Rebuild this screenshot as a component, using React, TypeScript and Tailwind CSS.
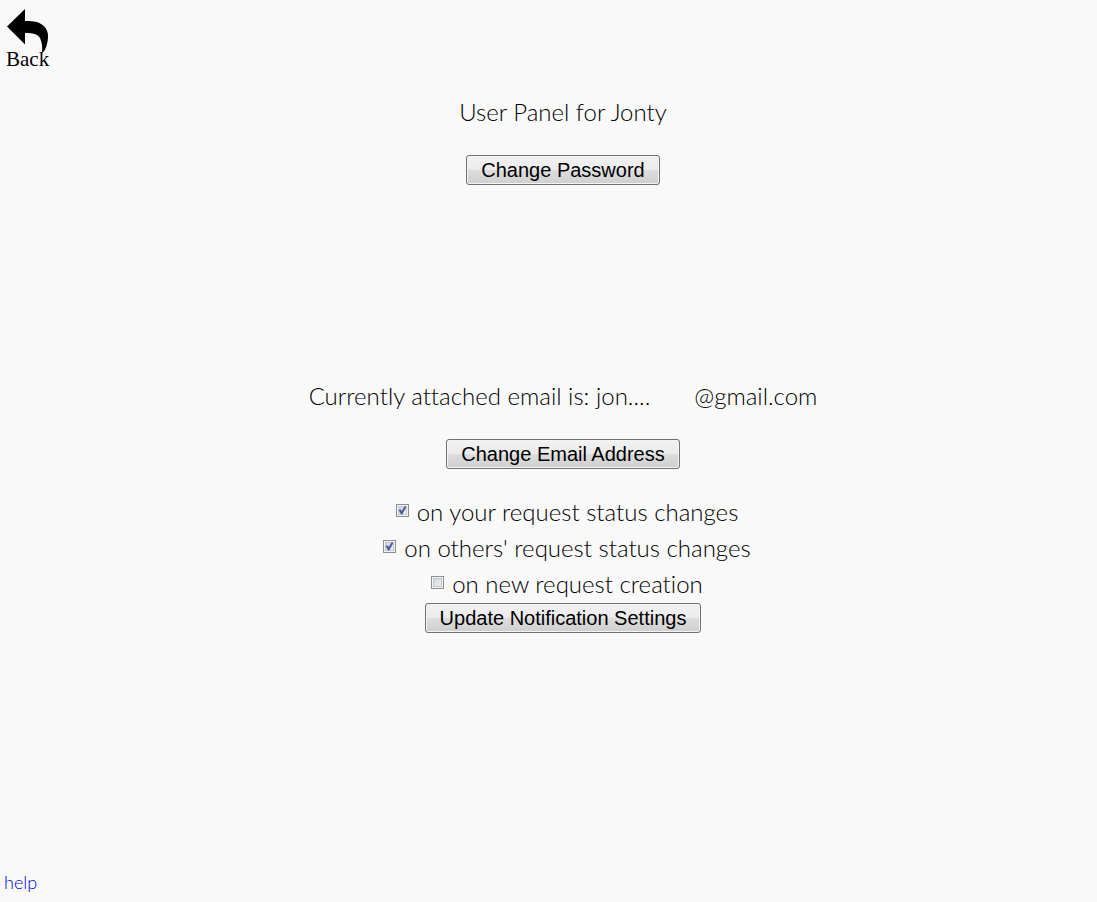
import { useState } from "react";
import type { ReactNode } from "react";

function PanelButton({ children }: { children: ReactNode }) {
  return (
    <button
      type="button"
      className="h-[30px] rounded-[3px] border border-[#707070] bg-[linear-gradient(to_bottom,#f2f2f2_0%,#ebebeb_50%,#dddddd_50%,#cfcfcf_100%)] px-3.5 font-['Liberation_Sans',Arial,sans-serif] text-[20px] leading-7 text-black shadow-[inset_0_0_0_1px_#f4f4f4]"
    >
      {children}
    </button>
  );
}

function Option({ id, label, initial }: { id: string; label: string; initial: boolean }) {
  const [checked, setChecked] = useState(initial);
  return (
    <div className="flex h-9 items-center justify-center gap-2 pl-2">
      <span className="relative mb-1 flex size-[13px]">
        <input
          id={id}
          type="checkbox"
          checked={checked}
          onChange={() => setChecked(!checked)}
          className="size-[13px] appearance-none border border-[#8e8f8f] bg-[linear-gradient(135deg,#cbcfd5,#f6f6f6)] shadow-[inset_0_0_0_1px_#f4f4f4,inset_0_0_0_2px_#c3c7cd]"
        />
        {checked && (
          <svg viewBox="0 0 13 13" className="pointer-events-none absolute inset-0 size-[13px]" aria-hidden="true">
            <path d="M3 6.2 4.4 5.5 5.7 7.4 8.8 2.5 10 3 6.1 10.2 5.3 10.2Z" fill="#405599" stroke="#405599" strokeWidth=".5" />
          </svg>
        )}
      </span>
      <label htmlFor={id}>{label}</label>
    </div>
  );
}

export default function App() {
  return (
    <div className="flex min-h-screen flex-col bg-[#f9f9f9] font-['Lato',sans-serif] text-[24px] leading-9 font-light text-black [font-variant-ligatures:none]">
      <header className="flex h-[70px] pt-2 pl-1.5">
        <a href="#back" className="flex flex-col items-start font-['Liberation_Serif',serif] text-[21px] leading-5 font-normal">
          <svg viewBox="0 0 44 45" className="-mb-1 h-[45px] w-11 shrink-0" aria-hidden="true">
            <path d="M1 18.5 19 1V13C25 13 31 13 35 16C39 18.5 42 22 42 28C42 35 40 41 37 44.5H36C36.500 39 36 34 34 30C31.500 26 27 25 19 25V36.500Z" fill="#000" />
          </svg>
          <span>Back</span>
        </a>
      </header>
      <main className="flex flex-1 flex-col items-center pt-6 pl-[29px] text-center">
        <h1>User Panel for Jonty</h1>
        <div className="mt-[25px] flex">
          <PanelButton>Change Password</PanelButton>
        </div>
        <p className="mt-[193px] flex flex-wrap justify-center gap-x-11">
          <span>Currently attached email is: jon....</span>
          <span>@gmail.com</span>
        </p>
        <div className="mt-[25px] flex">
          <PanelButton>Change Email Address</PanelButton>
        </div>
        <form className="mt-[25px] flex flex-col items-center" onSubmit={(e) => e.preventDefault()}>
          <Option id="own-status" label="on your request status changes" initial={true} />
          <Option id="others-status" label="on others' request status changes" initial={true} />
          <Option id="new-request" label="on new request creation" initial={false} />
          <div className="flex pt-px">
            <PanelButton>Update Notification Settings</PanelButton>
          </div>
        </form>
      </main>
      <footer className="flex px-1 pb-2 text-[18px] leading-6">
        <a href="#help" className="text-[#0000ee]">help</a>
      </footer>
    </div>
  );
}
